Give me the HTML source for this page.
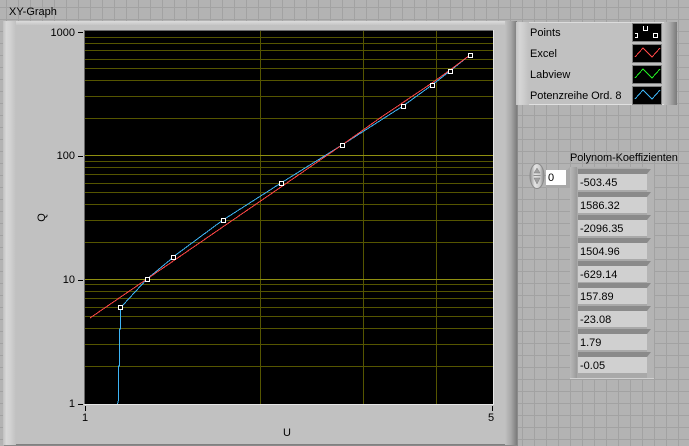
<!DOCTYPE html>
<html><head><meta charset="utf-8"><style>
html,body{margin:0;padding:0}
body{width:689px;height:446px;overflow:hidden;position:relative;background-color:#b3b3b3;
background-image:linear-gradient(90deg,#a2a2a2 1px,transparent 1px),linear-gradient(#a2a2a2 1px,transparent 1px);
background-size:12px 12px;background-position:6px 0,0 7px;
font-family:"Liberation Sans",sans-serif;font-size:11px;color:#000}
div,span{position:absolute}
.t{white-space:nowrap;line-height:13px;height:13px}
.r{text-align:right}
.cell{left:578px;width:69px;height:16px;background:#d0d0d0;line-height:18px;text-indent:2px;font-size:11px}
.top{left:574px;width:77px;height:5px;background:#8a8a8a;clip-path:polygon(4px 0,100% 0,73px 100%,4px 100%)}
.sw{left:633px;width:28px;height:17px;background:#000;box-shadow:0 0 0 1px #808080}
</style></head><body>
<div class="t" style="left:9px;top:6px">XY-Graph</div>
<!-- graph panel -->
<div style="left:3px;top:21px;width:514px;height:424px;background:#c1c1c1;box-shadow:inset 0 -1px 0 #808080,1px 1px 0 #8a8a8a"></div>
<div style="left:3px;top:21px;width:514px;height:4px;background:linear-gradient(#dcdcdc,#c6c6c6)"></div>
<div style="left:3px;top:21px;width:13px;height:424px;background:linear-gradient(90deg,#c0c0c0 0,#d8d8d8 25%,#d2d2d2 55%,#c1c1c1 100%)"></div>
<div style="left:505px;top:21px;width:12px;height:424px;background:linear-gradient(90deg,#c1c1c1,#a8a8a8 50%,#7a7a7a)"></div>
<!-- plot -->
<svg style="position:absolute;left:0;top:0" width="689" height="446" viewBox="0 0 689 446">
<g shape-rendering="crispEdges" fill="none">
<rect x="85" y="31" width="408" height="373" fill="#000"/>
<path stroke="#555500" d="M85 37.500H493M85 43.500H493M85 50.500H493M85 59.500H493M85 68.500H493M85 80.500H493M85 96.500H493M85 118.500H493M85 161.500H493M85 167.500H493M85 174.500H493M85 183.500H493M85 192.500H493M85 204.500H493M85 220.500H493M85 242.500H493M85 284.500H493M85 291.500H493M85 298.500H493M85 307.500H493M85 316.500H493M85 328.500H493M85 344.500H493M85 366.500H493M260.500 31V404M363.500 31V404M436.500 31V404"/>
<path stroke="#8f8f10" d="M85 155.500H493M85 279.500H493"/>
<path stroke="#6a6a6a" d="M84.500 30V404M84 30.500H494"/>
<path stroke="#e6e6e6" d="M84 404.500H494M493.500 30V404"/>
<path stroke="#000" d="M78 32.500H83M78 156.500H83M78 280.500H83M78 404.500H83M85.500 406V411M492.500 406V411"/>
</g>
<g fill="none" stroke-width="1" shape-rendering="crispEdges">
<polyline stroke="#3db4f5" points="117.500,404 118.500,400 118.500,366 119.500,366 119.500,329 120.500,329 120.500,307 123,305 147,279 170,260 173,257 223,220 281,183 342,145 403,106 432,85 450,71 470,55"/>
<polyline stroke="#ff4646" points="90,318 147,279 230,222 281,187 342,145 380,118 432,83 450,70 470,55"/>
</g>
<g fill="#000" stroke="#fff" shape-rendering="crispEdges">
<rect x="118.500" y="305.500" width="4" height="4"/><rect x="145.500" y="277.500" width="4" height="4"/><rect x="171.500" y="255.500" width="4" height="4"/><rect x="221.500" y="218.500" width="4" height="4"/><rect x="279.500" y="181.500" width="4" height="4"/><rect x="340.500" y="143.500" width="4" height="4"/><rect x="401.500" y="104.500" width="4" height="4"/><rect x="430.500" y="83.500" width="4" height="4"/><rect x="448.500" y="69.500" width="4" height="4"/><rect x="468.500" y="53.500" width="4" height="4"/>
</g>
</svg>
<div class="t r" style="left:40px;width:35px;top:27px">1000</div>
<div class="t r" style="left:40px;width:35px;top:150px">100</div>
<div class="t r" style="left:40px;width:35px;top:274px">10</div>
<div class="t r" style="left:40px;width:35px;top:398px">1</div>
<div class="t" style="left:82px;top:412px">1</div>
<div class="t" style="left:488px;top:412px">5</div>
<div class="t" style="left:283px;top:427px">U</div>
<div class="t" style="left:38px;top:211px;transform:rotate(-90deg)">Q</div>
<!-- legend -->
<div style="left:516px;top:22px;width:161px;height:83px;background:#c1c1c1;box-shadow:inset 0 1px 0 #dcdcdc,inset 0 -1px 0 #e0e0e0"></div>
<div style="left:516px;top:22px;width:13px;height:83px;background:linear-gradient(90deg,#c4c4c4,#d6d6d6 30%,#c1c1c1)"></div>
<div style="left:664px;top:22px;width:13px;height:83px;background:linear-gradient(90deg,#c1c1c1,#a5a5a5 50%,#7a7a7a)"></div>
<div class="t" style="left:530px;top:27px">Points</div>
<div class="t" style="left:530px;top:48px">Excel</div>
<div class="t" style="left:530px;top:69px">Labview</div>
<div class="t" style="left:530px;top:90px;letter-spacing:-.05px">Potenzreihe Ord. 8</div>
<div class="sw" style="top:24px"></div><div class="sw" style="top:45px"></div><div class="sw" style="top:66px"></div><div class="sw" style="top:87px"></div>
<svg style="position:absolute;left:0;top:0" width="689" height="446" viewBox="0 0 689 446">
<g fill="none" shape-rendering="crispEdges">
<path stroke="#fff" d="M643.500 26V30.500H647.500V26M635 33.500H637.500V37.500H635M653.500 33.500H657.500V37.500H653.500Z"/>
<polyline stroke="#ff4646" points="635,57 643,48 652,57 660,48"/>
<polyline stroke="#22ee22" points="635,78 643,69 652,78 660,69"/>
<polyline stroke="#3db4f5" points="635,99 643,90 652,99 660,90"/>
</g>
</svg>
<!-- array -->
<div class="t" style="left:570px;top:152px;letter-spacing:-.1px">Polynom-Koeffizienten</div>
<div style="left:570px;top:167px;width:84px;height:212px;background:#a9a9a9;box-shadow:inset 0 0 0 1px #b0b0b0"></div>
<div style="left:570px;top:167px;width:7px;height:212px;background:linear-gradient(90deg,#b9b9b9,#9a9a9a)"></div>
<div style="left:647px;top:167px;width:7px;height:212px;background:#b4b4b4"></div>
<div style="left:570px;top:378px;width:84px;height:1px;background:#d0d0d0"></div>
<div class="top" style="top:169px"></div><div class="cell" style="top:174px">-503.45</div>
<div class="top" style="top:192px"></div><div class="cell" style="top:197px">1586.32</div>
<div class="top" style="top:215px"></div><div class="cell" style="top:220px">-2096.35</div>
<div class="top" style="top:238px"></div><div class="cell" style="top:243px">1504.96</div>
<div class="top" style="top:261px"></div><div class="cell" style="top:266px">-629.14</div>
<div class="top" style="top:283px"></div><div class="cell" style="top:288px">157.89</div>
<div class="top" style="top:306px"></div><div class="cell" style="top:311px">-23.08</div>
<div class="top" style="top:329px"></div><div class="cell" style="top:334px">1.79</div>
<div class="top" style="top:352px"></div><div class="cell" style="top:357px">-0.05</div>
<!-- index -->
<div style="left:546px;top:167px;width:24px;height:21px;background:#a8a8a8;clip-path:polygon(0 3px,21px 3px,24px 0,24px 21px,0 21px)"></div>
<div style="left:546px;top:170px;width:20px;height:15px;background:#fff;line-height:16px;text-indent:2px">0</div>
<svg style="position:absolute;left:529px;top:163px" width="16" height="26" viewBox="0 0 16 26">
<defs><linearGradient id="g" x1="0" x2="1" y1="0" y2="0"><stop offset="0" stop-color="#8f8f8f"/><stop offset=".35" stop-color="#e4e4e4"/><stop offset=".7" stop-color="#cfcfcf"/><stop offset="1" stop-color="#8a8a8a"/></linearGradient></defs>
<ellipse cx="8" cy="13" rx="7" ry="12.500" fill="url(#g)" stroke="#8a8a8a"/>
<path d="M4.500 12.500H11.500" stroke="#8e8e8e"/>
<path d="M8 5L5 10H11Z" fill="#a0a0a0" stroke="#808080" stroke-width=".5"/>
<path d="M8 21L5 15H11Z" fill="#a0a0a0" stroke="#808080" stroke-width=".5"/>
</svg>
</body></html>
